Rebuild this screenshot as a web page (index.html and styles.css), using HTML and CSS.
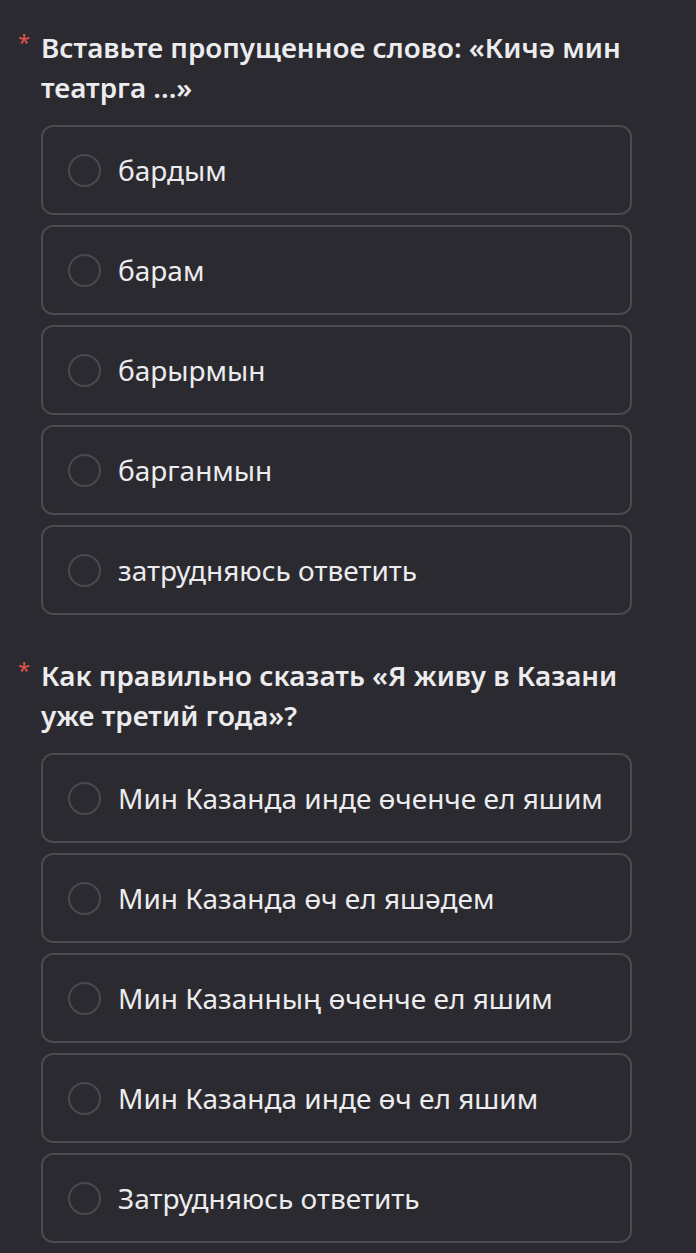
FILE: index.html
```html
<!DOCTYPE html>
<html lang="ru">
<head>
    <meta charset="UTF-8">
    <meta name="viewport" content="width=device-width, initial-scale=1.0">
    <title>Тест</title>
    <link rel="stylesheet" href="styles.css">
</head>
<body>
    <div class="form">
        <div class="question">
            <div class="question-title">
                <span class="required">*</span>
                Вставьте пропущенное слово: «Кичә мин театрга ...»
            </div>
            <div class="options">
                <label class="option"><span class="radio"></span><span class="option-text">бардым</span></label>
                <label class="option"><span class="radio"></span><span class="option-text">барам</span></label>
                <label class="option"><span class="radio"></span><span class="option-text">барырмын</span></label>
                <label class="option"><span class="radio"></span><span class="option-text">барганмын</span></label>
                <label class="option"><span class="radio"></span><span class="option-text">затрудняюсь ответить</span></label>
            </div>
        </div>

        <div class="question">
            <div class="question-title">
                <span class="required">*</span>
                Как правильно сказать «Я живу в Казани уже третий года»?
            </div>
            <div class="options">
                <label class="option"><span class="radio"></span><span class="option-text">Мин Казанда инде өченче ел яшим</span></label>
                <label class="option"><span class="radio"></span><span class="option-text">Мин Казанда өч ел яшәдем</span></label>
                <label class="option"><span class="radio"></span><span class="option-text">Мин Казанның өченче ел яшим</span></label>
                <label class="option"><span class="radio"></span><span class="option-text">Мин Казанда инде өч ел яшим</span></label>
                <label class="option"><span class="radio"></span><span class="option-text">Затрудняюсь ответить</span></label>
            </div>
        </div>
    </div>
</body>
</html>
```

FILE: styles.css
```css
body {
    margin: 0;
    background: #2b2a30;
    color: #ececee;
    font-family: "Noto Sans", "Open Sans", sans-serif;
}
.form {
    padding: 27px 64px 0 41px;
}
.question {
    margin-bottom: 40px;
}
.question-title {
    position: relative;
    font-size: 27.8px;
    font-weight: 600;
    line-height: 40px;
    margin-bottom: 18px;
}
.required {
    position: absolute;
    left: -23px;
    top: -6px;
    color: #e0544c;
    font-size: 22px;
    font-weight: 400;
}
.options {
    display: flex;
    flex-direction: column;
    gap: 10px;
}
.option {
    display: flex;
    align-items: center;
    height: 90px;
    box-sizing: border-box;
    padding-left: 25px;
    border: 2px solid #4b4a50;
    border-radius: 12px;
    cursor: pointer;
}
.radio {
    width: 33px;
    height: 33px;
    box-sizing: border-box;
    border: 2px solid #4a494f;
    border-radius: 50%;
    margin-right: 17px;
    flex-shrink: 0;
}
.option-text {
    font-size: 28px;
}
```
